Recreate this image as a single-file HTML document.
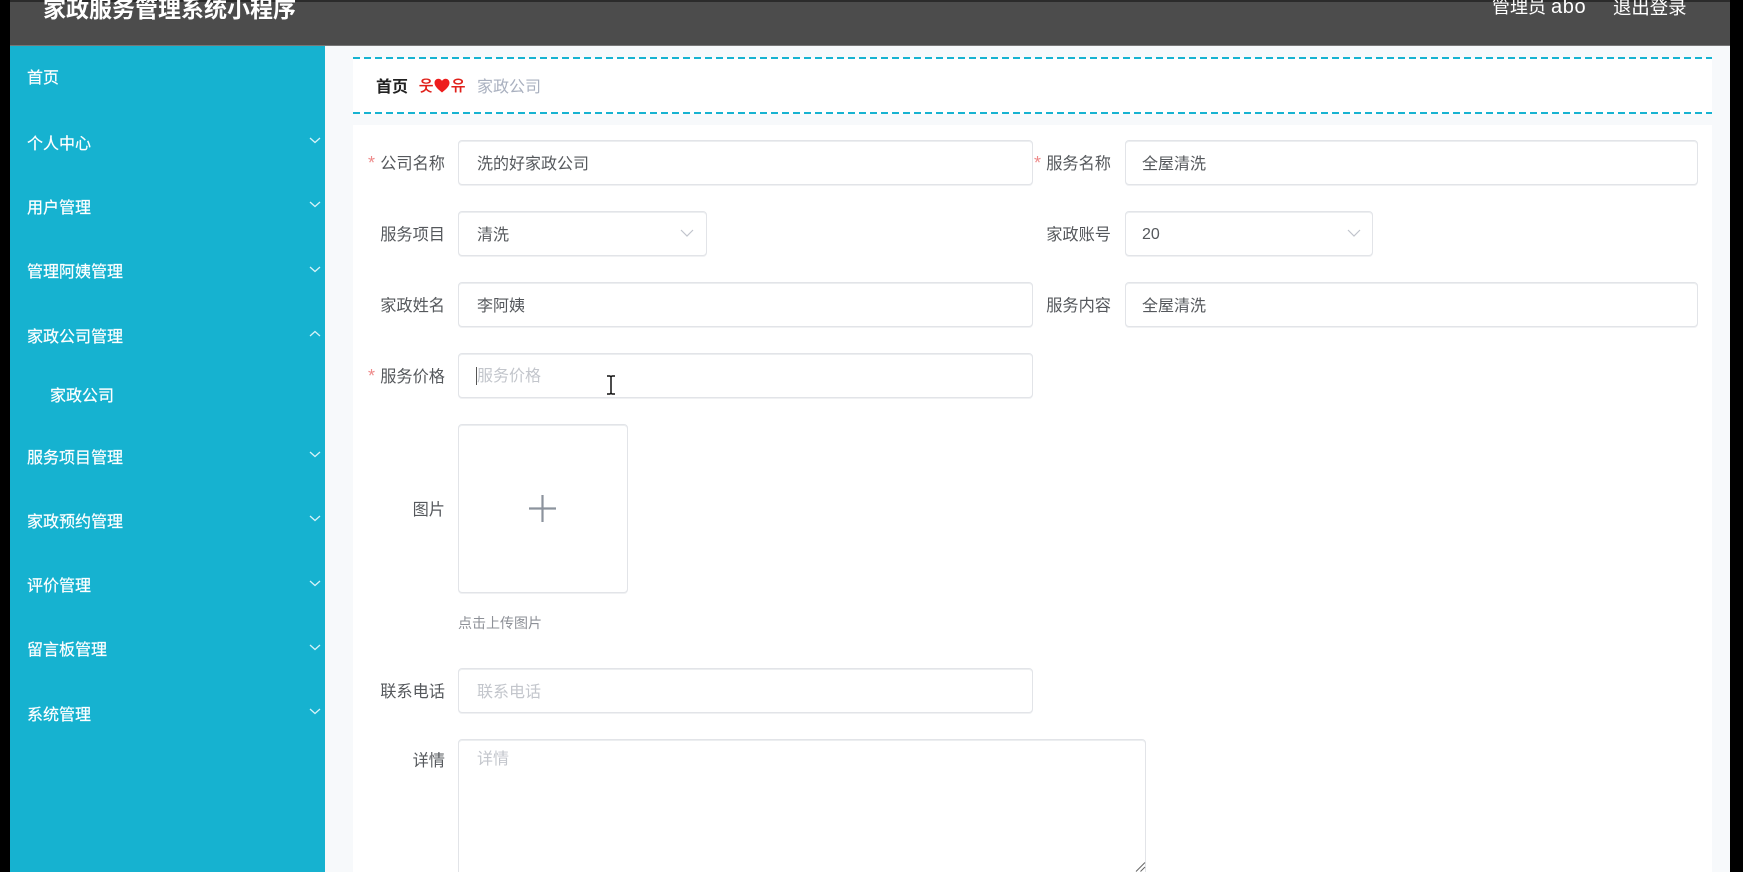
<!DOCTYPE html>
<html lang="zh">
<head>
<meta charset="utf-8">
<title>家政服务管理系统小程序</title>
<style>
html,body{margin:0;padding:0;width:1743px;height:872px;overflow:hidden;background:#000}
body{position:relative;font-family:"Liberation Sans","Noto Sans CJK SC",sans-serif;font-size:16px}
#w{position:absolute;left:0;top:0;width:1743px;height:872px;filter:blur(.35px)}
div{box-sizing:border-box}
.abs{position:absolute}
.t{position:absolute;line-height:22px;height:22px;white-space:nowrap}
.m{color:#fff;font-size:16px;left:27px;-webkit-text-stroke:.2px #fff}
.l{color:#55585c;font-size:16.2px;text-align:right;width:110px}
.box{position:absolute;background:#fff;border:1px solid #e2e4e8;border-radius:4px;box-shadow:inset 0 1px 0 #eceef0,0 1px 0 #f0f1f3}
.v{color:#55585c;font-size:16px}
.p{color:#c3c6cc;font-size:16px}
.s{color:#ee8a8a;font-size:18px}
svg{position:absolute;overflow:visible}
</style>
</head>
<body>
<div id="w">
<div class="abs" style="left:10px;top:0;width:1720px;height:872px;background:#f7f9fb"></div>

<!-- header -->
<div class="abs" style="left:10px;top:0;width:1720px;height:46px;background:#4c4c4c;border-bottom:1px solid #777"></div>
<div class="abs" style="left:0;top:0;width:1743px;height:2px;background:#2b2b2b"></div>
<div class="t" style="left:43px;top:-2px;color:#fff;font-size:23px;font-weight:700">家政服务管理系统小程序</div>
<div class="t" style="left:1492px;top:-4px;color:#fff;font-size:18px">管理员 <span style="font-size:20px;letter-spacing:.6px">abo</span></div>
<div class="t" style="left:1613px;top:-3px;color:#fff;font-size:18.400px">退出登录</div>

<!-- sidebar -->
<div class="abs" style="left:10px;top:46px;width:315px;height:826px;background:#16b2d0"></div>
<div class="t m" style="top:68px">首页</div>
<div class="t m" style="top:134px">个人中心</div>
<div class="t m" style="top:198px">用户管理</div>
<div class="t m" style="top:262px">管理阿姨管理</div>
<div class="t m" style="top:327px">家政公司管理</div>
<div class="t m" style="top:386px;left:50px">家政公司</div>
<div class="t m" style="top:448px">服务项目管理</div>
<div class="t m" style="top:512px">家政预约管理</div>
<div class="t m" style="top:576px">评价管理</div>
<div class="t m" style="top:640px">留言板管理</div>
<div class="t m" style="top:705px">系统管理</div>

<svg width="1743" height="872" style="left:0;top:0" fill="none" stroke="#d6f3f8" stroke-width="1.3">
<path d="M310 138l5 4.500 5-4.500"/>
<path d="M310 202l5 4.500 5-4.500"/>
<path d="M310 267l5 4.500 5-4.500"/>
<path d="M310 336l5-4.500 5 4.500"/>
<path d="M310 452l5 4.500 5-4.500"/>
<path d="M310 516l5 4.500 5-4.500"/>
<path d="M310 581l5 4.500 5-4.500"/>
<path d="M310 645l5 4.500 5-4.500"/>
<path d="M310 709l5 4.500 5-4.500"/>
</svg>

<!-- breadcrumb -->
<div class="abs" style="left:353px;top:58px;width:1359px;height:56px;background:#fff"></div>
<div class="abs" style="left:353px;top:57px;width:1359px;height:2px;background:repeating-linear-gradient(90deg,#17b3d1 0,#17b3d1 7px,transparent 7px,transparent 11px)"></div>
<div class="abs" style="left:353px;top:112px;width:1359px;height:2px;background:repeating-linear-gradient(90deg,#17b3d1 0,#17b3d1 7px,transparent 7px,transparent 11px)"></div>
<div class="t" style="left:376px;top:77px;font-size:16px;font-weight:700;color:#222">首页</div>
<div class="t" style="left:419px;top:76px;font-size:15px;font-weight:700;color:#e0201a;font-family:'NanumGothic','Noto Sans CJK KR',sans-serif">웃</div>
<svg width="16" height="15" viewBox="0 0 16 15" style="left:434px;top:78px"><path fill="#ee1c1c" d="M8 14.500C3 10.500 .5 8 .5 4.800 .5 2.300 2.400 .8 4.300 .8 5.900 .8 7.300 1.700 8 3 8.700 1.700 10.100 .8 11.700 .8 13.600 .8 15.500 2.300 15.500 4.800 15.500 8 13 10.500 8 14.500z"/></svg>
<div class="t" style="left:451px;top:76px;font-size:15px;font-weight:700;color:#e0201a;font-family:'NanumGothic','Noto Sans CJK KR',sans-serif">유</div>
<div class="t" style="left:477px;top:77px;font-size:16px;color:#a9b0bf">家政公司</div>

<!-- form area -->
<div class="abs" style="left:353px;top:125px;width:1359px;height:747px;background:#fff"></div>

<!-- row 1 -->
<div class="t s" style="left:368px;top:152px">*</div>
<div class="t l" style="left:335px;top:153px">公司名称</div>
<div class="box" style="left:458px;top:140px;width:575px;height:45px"></div>
<div class="t v" style="left:477px;top:154px">洗的好家政公司</div>
<div class="t s" style="left:1034px;top:152px">*</div>
<div class="t l" style="left:1001px;top:153px">服务名称</div>
<div class="box" style="left:1125px;top:140px;width:573px;height:45px"></div>
<div class="t v" style="left:1142px;top:154px">全屋清洗</div>

<!-- row 2 -->
<div class="t l" style="left:335px;top:224px">服务项目</div>
<div class="box" style="left:458px;top:211px;width:249px;height:45px"></div>
<div class="t v" style="left:477px;top:225px">清洗</div>
<div class="t l" style="left:1001px;top:224px">家政账号</div>
<div class="box" style="left:1125px;top:211px;width:248px;height:45px"></div>
<div class="t v" style="left:1142px;top:224px">20</div>

<!-- row 3 -->
<div class="t l" style="left:335px;top:295px">家政姓名</div>
<div class="box" style="left:458px;top:282px;width:575px;height:45px"></div>
<div class="t v" style="left:477px;top:296px">李阿姨</div>
<div class="t l" style="left:1001px;top:295px">服务内容</div>
<div class="box" style="left:1125px;top:282px;width:573px;height:45px"></div>
<div class="t v" style="left:1142px;top:296px">全屋清洗</div>

<!-- row 4 -->
<div class="t s" style="left:368px;top:365px">*</div>
<div class="t l" style="left:335px;top:366px">服务价格</div>
<div class="box" style="left:458px;top:353px;width:575px;height:45px"></div>
<div class="t p" style="left:477px;top:366px">服务价格</div>
<div class="abs" style="left:476px;top:367px;width:1px;height:18px;background:#555"></div>

<!-- upload -->
<div class="t l" style="left:335px;top:499px">图片</div>
<div class="box" style="left:458px;top:424px;width:170px;height:169px"></div>
<svg width="28" height="28" style="left:529px;top:495px" fill="none" stroke="#8c939d" stroke-width="2.200"><path d="M0 13.500h27M13.500 0v27"/></svg>
<div class="t" style="left:458px;top:612px;font-size:14px;color:#8d9097">点击上传图片</div>

<!-- phone -->
<div class="t l" style="left:335px;top:681px">联系电话</div>
<div class="box" style="left:458px;top:668px;width:575px;height:45px"></div>
<div class="t p" style="left:477px;top:682px">联系电话</div>

<!-- details -->
<div class="t l" style="left:335px;top:750px">详情</div>
<div class="box" style="left:458px;top:739px;width:688px;height:140px"></div>
<div class="t p" style="left:477px;top:749px">详情</div>
<svg width="12" height="12" style="left:1134px;top:860px" fill="none" stroke="#666" stroke-width="1"><path d="M2 11.500L11 2.500M6.500 11.500L11 7"/></svg>

<!-- select chevrons -->
<svg width="1743" height="872" style="left:0;top:0" fill="none" stroke="#c0c4cc" stroke-width="1.200">
<path d="M681 230l6 6 6-6"/>
<path d="M1348 230l6 6 6-6"/>
</svg>

<!-- I-beam cursor -->
<svg width="12" height="20" style="left:605px;top:375px" fill="none" stroke="#111" stroke-width="1.500"><path d="M2 1h3l1 1 1-1h3M6 2v16M2 19h3l1-1 1 1h3"/></svg>

<!-- black side bars -->
<div class="abs" style="left:0;top:0;width:10px;height:872px;background:#000"></div>
<div class="abs" style="left:1730px;top:0;width:13px;height:872px;background:#000"></div>
</div>
</body>
</html>
